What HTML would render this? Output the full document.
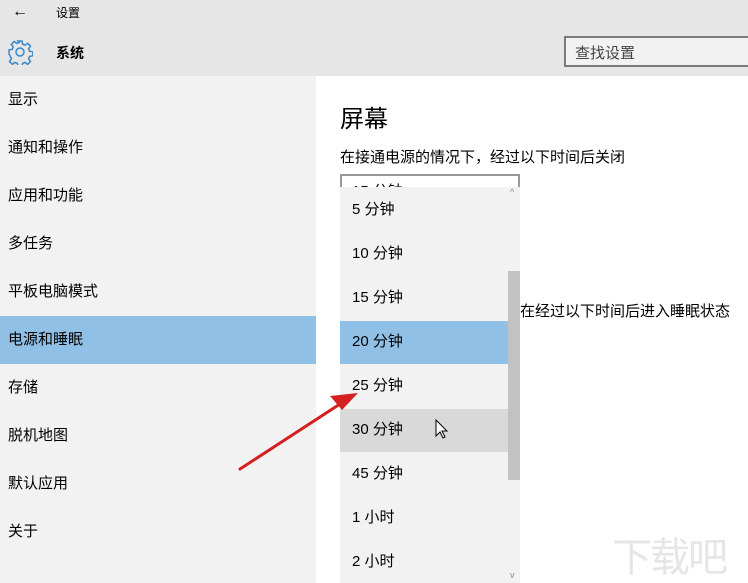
<!DOCTYPE html>
<html><head><meta charset="utf-8"><style>
*{margin:0;padding:0;box-sizing:border-box}
body{width:748px;height:583px;overflow:hidden;background:#fff;font-family:"Liberation Sans","Noto Sans CJK SC",sans-serif;color:#000;position:relative}
.hdr{position:absolute;left:0;top:0;width:748px;height:76px;background:#e6e6e6}
.side{position:absolute;left:0;top:76px;width:316px;height:507px;background:#f2f2f2}
.si{position:absolute;left:8px;font-size:15px;line-height:20px}
.sel{position:absolute;left:0;top:316px;width:316px;height:48px;background:#90c0e6}
.t{position:absolute;white-space:nowrap}
.dd{position:absolute;left:340px;top:187px;width:180px;height:396px;background:#f2f2f2}
.it{position:absolute;left:12px;font-size:15px;line-height:20px}
</style></head><body>
<div class="hdr"></div>
<div class="t" style="left:12px;top:3px;font-size:16px">←</div>
<div class="t" style="left:56px;top:4px;font-size:12px">设置</div>
<svg style="position:absolute;left:7px;top:39px" width="26" height="26" viewBox="0 0 26 26"><path d="M11 2h4l.6 3.2 2.4 1 2.7-1.9 2.8 2.8-1.9 2.7 1 2.4 3.2.6v4l-3.2.6-1 2.4 1.9 2.7-2.8 2.8-2.7-1.9-2.4 1-.6 3.2h-4l-.6-3.2-2.4-1-2.7 1.9-2.8-2.8 1.9-2.7-1-2.4L2 15v-4l3.2-.6 1-2.4-1.9-2.7 2.8-2.8 2.7 1.9 2.4-1z" fill="none" stroke="#3a87c9" stroke-width="1.5"/><circle cx="13" cy="13" r="4" fill="none" stroke="#3a87c9" stroke-width="1.5"/></svg>
<div class="t" style="left:56px;top:43px;font-size:14px;font-weight:bold">系统</div>
<div style="position:absolute;left:564px;top:36px;width:190px;height:31px;border:2px solid #7a7a7a;background:#f2f2f2"></div>
<div class="t" style="left:575px;top:42px;font-size:15px;color:#444">查找设置</div>
<div class="side"></div>
<div class="sel"></div>
<div class="si" style="top:90px">显示</div>
<div class="si" style="top:138px">通知和操作</div>
<div class="si" style="top:186px">应用和功能</div>
<div class="si" style="top:234px">多任务</div>
<div class="si" style="top:282px">平板电脑模式</div>
<div class="si" style="top:330px">电源和睡眠</div>
<div class="si" style="top:378px">存储</div>
<div class="si" style="top:426px">脱机地图</div>
<div class="si" style="top:474px">默认应用</div>
<div class="si" style="top:522px">关于</div>
<div class="t" style="left:340px;top:99px;font-size:24px">屏幕</div>
<div class="t" style="left:340px;top:146px;font-size:15px">在接通电源的情况下，经过以下时间后关闭</div>
<div style="position:absolute;left:340px;top:174px;width:180px;height:20px;border:2px solid #999;border-bottom:none;overflow:hidden"><div class="t" style="left:10px;top:4px;font-size:15px">15 分钟</div></div>
<div class="t" style="left:520px;top:300px;font-size:15px">在经过以下时间后进入睡眠状态</div>
<div class="dd">
<div style="position:absolute;left:0;top:134px;width:168px;height:43px;background:#90c0e6"></div>
<div style="position:absolute;left:0;top:222px;width:168px;height:43px;background:#d9d9d9"></div>
<div style="position:absolute;left:168px;top:84px;width:12px;height:209px;background:#c2c2c2"></div>
<div class="t" style="left:170px;top:0;font-size:9px;color:#888">^</div>
<div class="t" style="left:170px;top:383px;font-size:9px;color:#888">v</div>
<div class="it" style="top:13px">5 分钟</div>
<div class="it" style="top:57px">10 分钟</div>
<div class="it" style="top:101px">15 分钟</div>
<div class="it" style="top:145px">20 分钟</div>
<div class="it" style="top:189px">25 分钟</div>
<div class="it" style="top:233px">30 分钟</div>
<div class="it" style="top:277px">45 分钟</div>
<div class="it" style="top:321px">1 小时</div>
<div class="it" style="top:365px">2 小时</div>
</div>
<svg style="position:absolute;left:0;top:0" width="748" height="583"><path d="M240 469 L340 404" stroke="#d42020" stroke-width="3" stroke-linecap="round"/><path d="M358 393 L330 396 L342 410 Z" fill="#d42020"/><path d="M436 420 v16 l4-4 3 6 2-1-3-6 5 0z" fill="#fff" stroke="#000" stroke-width="1"/></svg>
<div class="t" style="left:612px;top:525px;font-size:40px;color:#e6e6e6;letter-spacing:-2px">下载吧</div>
</body></html>
